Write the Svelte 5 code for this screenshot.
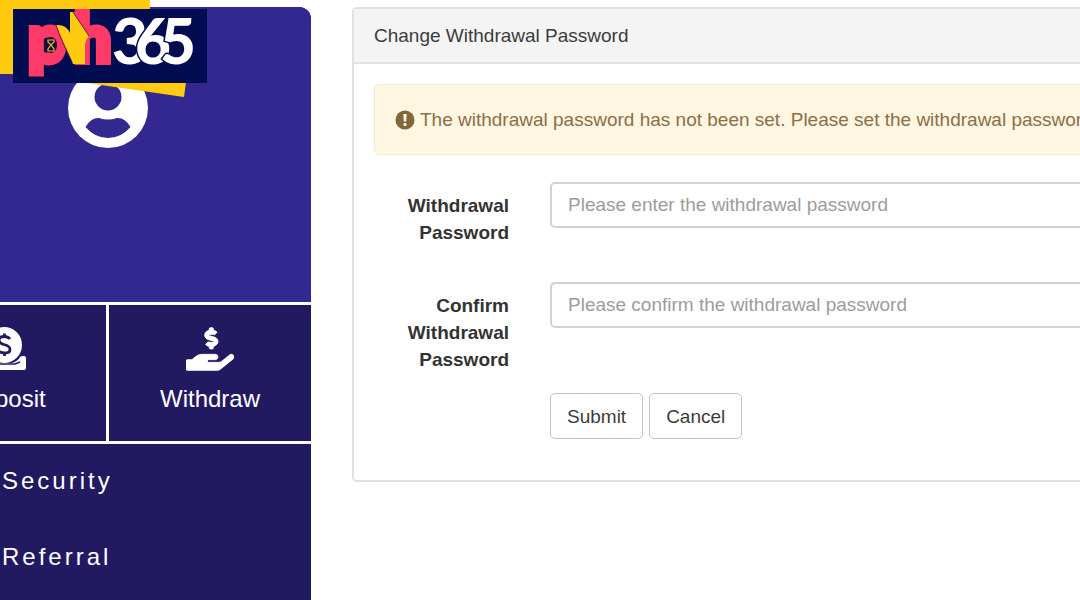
<script>
  let password = $state('');
  let confirmation = $state('');

  function reset() {
    password = '';
    confirmation = '';
  }
</script>

<div class="page">
  <a class="brand" href="#home" aria-label="ph365">
    <svg viewBox="0 0 210 100" width="210" height="100" role="img">
      <path d="M0 0H150V9H13V74H0Z" fill="#fecb10" />
      <path d="M80 82H186L184 97Z" fill="#fecb10" />
      <rect x="13" y="9" width="194" height="74" fill="#020c50" />
      <text x="28" y="62" class="ph">p</text>
      <text x="74" y="62" class="ph">h</text>
      <path d="M72 12H85V34H80Z" fill="#fd3a68" />
      <path d="M70 12H73L89 36Q86 39 85 44V64H73L56 25Q66 24 70 33Z" fill="#fecb10" />
      <path d="M73 12L89 36" stroke="#6b1b43" stroke-width="1" />
      <path d="M56 25Q60 38 72 62" fill="none" stroke="#6b1b43" stroke-width="1" />
      <ellipse cx="51" cy="45" rx="6" ry="8" fill="#1d0f2e" />
      <path d="M48 40H54V42L51 45L48 42ZM48 51H54V49L51 45L48 49Z" fill="none" stroke="#e8b53c" stroke-width="1.2" />
      <text x="112" y="64" class="num">3</text>
      <text x="135" y="64" class="num">6</text>
      <text x="160" y="64" class="num">5</text>
    </svg>
  </a>

  <aside class="sidebar">
    <div class="profile">
      <svg viewBox="0 0 80 80" width="80" height="80" aria-hidden="true">
        <circle cx="40" cy="40" r="40" fill="#fff" />
        <circle cx="40" cy="29" r="13.5" fill="#33288f" />
        <path d="M17.5 59Q23 49.5 31 50Q40 53 49 50Q57 49.5 62.500 59Q53 70 40 70Q27 70 17.500 59Z" fill="#33288f" />
      </svg>
    </div>
    <nav class="actions">
      <a href="#deposit">
        <svg viewBox="0 0 48 44" width="48" height="44" aria-hidden="true">
          <path d="M2 31Q2 29 4 29H9Q12 34 17 36H31Q37 34 39 30Q41 28.500 43 29Q45 29 45 31V41Q45 43 43 43H4Q2 43 2 41Z" fill="#fff" />
          <circle cx="23" cy="18" r="18" fill="#fff" />
          <path d="M12 37H34L39 35" fill="none" stroke="#221a61" stroke-width="1.5" />
          <path d="M29 12Q27 9.500 23 9.500Q18 9.500 18 13Q18 16 23 17.500Q29 19 29 22.500Q29 26 24 26Q19 26 17 23M23.500 6.500V10M23.500 25V29" fill="none" stroke="#221a61" stroke-width="2.800" />
        </svg>
        <span>Deposit</span>
      </a>
      <a href="#withdraw">
        <svg viewBox="0 0 576 512" width="48" height="44" aria-hidden="true">
          <path fill="#fff" stroke="#fff" stroke-width="10" d="M271.06,144.3l54.27,14.3a8.59,8.59,0,0,1,6.63,8.1c0,4.6-4.09,8.4-9.12,8.4h-35.6a30,30,0,0,1-11.19-2.2c-5.24-2.2-11.28-1.7-15.3,2l-19,17.5a11.68,11.68,0,0,0-2.25,2.66,11.42,11.42,0,0,0,3.88,15.74,83.77,83.77,0,0,0,34.51,11.5V240c0,8.8,7.83,16,17.37,16h17.37c9.55,0,17.38-7.2,17.38-16V222.4c32.93-3.6,57.84-31,53.5-63-3.15-23-22.46-41.3-46.56-47.7L282.68,97.4a8.59,8.59,0,0,1-6.63-8.1c0-4.6,4.09-8.4,9.12-8.4h35.6A30,30,0,0,1,332,83.1c5.23,2.2,11.28,1.7,15.3-2l19-17.5A11.31,11.31,0,0,0,368.47,61a11.43,11.43,0,0,0-3.84-15.78,83.82,83.82,0,0,0-34.52-11.5V16c0-8.8-7.82-16-17.37-16H295.37C285.82,0,278,7.2,278,16V33.6c-32.89,3.6-57.85,31-53.51,63C227.63,119.6,247,137.9,271.06,144.3ZM565.27,328.1c-11.8-10.7-30.2-10-42.6,0L430.27,402a63.64,63.64,0,0,1-40,14H272a16,16,0,0,1,0-32h78.29c15.9,0,30.71-10.9,33.25-26.6a31.2,31.2,0,0,0,.46-5.46A32,32,0,0,0,352,320H192a117.66,117.66,0,0,0-74.1,26.29L71.4,384H16A16,16,0,0,0,0,400v96a16,16,0,0,0,16,16H372.77a64,64,0,0,0,40-14L564,377a32,32,0,0,0,1.28-48.9Z" />
        </svg>
        <span>Withdraw</span>
      </a>
    </nav>
    <nav class="menu">
      <a href="#security">Security</a>
      <a href="#referral">Referral</a>
    </nav>
  </aside>

  <main class="panel">
    <h1>Change Withdrawal Password</h1>
    <div class="body">
      <p class="notice" role="alert">
        <svg viewBox="0 0 20 20" width="20" height="20" aria-hidden="true">
          <circle cx="10" cy="10" r="9.500" fill="#826738" />
          <path d="M8.300 4H11.700L11.200 11.500H8.800Z" fill="#fdf6e0" />
          <rect x="8.500" y="13" width="3" height="3" rx="1" fill="#fdf6e0" />
        </svg>
        <span>The withdrawal password has not been set. Please set the withdrawal password.</span>
      </p>
      <form onsubmit={(event) => event.preventDefault()}>
        <div class="row">
          <label for="password">Withdrawal Password</label>
          <input id="password" type="password" placeholder="Please enter the withdrawal password" bind:value={password} />
        </div>
        <div class="row">
          <label for="confirmation">Confirm Withdrawal Password</label>
          <input id="confirmation" type="password" placeholder="Please confirm the withdrawal password" bind:value={confirmation} />
        </div>
        <div class="row">
          <div class="buttons">
            <button type="submit">Submit</button>
            <button type="button" onclick={reset}>Cancel</button>
          </div>
        </div>
      </form>
    </div>
  </main>
</div>

<style>
  :global(body) {
    background: #fff;
    overflow: hidden;
  }

  .page,
  .page * {
    box-sizing: border-box;
  }

  .page {
    position: relative;
    display: flex;
    align-items: flex-start;
    gap: 41px;
    min-height: 100vh;
    padding-top: 7px;
    overflow: hidden;
    color: #3c3c3c;
    font: 19px/27px "Liberation Sans", Arial, sans-serif;
  }

  .brand {
    position: absolute;
    top: 0;
    left: 0;
  }

  .brand svg {
    display: block;
  }

  .ph {
    fill: #fd3a68;
    stroke: #fd3a68;
    stroke-width: 6px;
    font: 900 66px Lato, sans-serif;
  }

  .num {
    fill: #fff;
    stroke: #020c50;
    stroke-width: 3px;
    paint-order: stroke;
    font: 900 62px Lato, sans-serif;
  }

  .sidebar {
    flex: 0 0 407px;
    display: flex;
    flex-direction: column;
    min-height: calc(100vh - 7px);
    margin-left: -96px;
    border-radius: 12px 12px 0 0;
    overflow: hidden;
    background: #221a61;
  }

  .profile {
    display: flex;
    justify-content: center;
    height: 295px;
    padding-top: 61px;
    background: #33288f;
  }

  .actions {
    display: grid;
    grid-template-columns: 1fr 1fr;
    gap: 3px;
    padding: 3px 0;
    background: #fff;
  }

  .actions a {
    display: flex;
    flex-direction: column;
    align-items: center;
    gap: 14px;
    padding: 22px 0 42px;
    background: #221a61;
    color: #fff;
    font-size: 24px;
    line-height: 28px;
    text-decoration: none;
  }

  .actions a span {
    height: 14px;
  }

  .menu {
    display: flex;
    flex-direction: column;
    gap: 2px;
  }

  .menu a {
    padding-left: 98px;
    color: #fff;
    font-size: 24px;
    line-height: 74px;
    letter-spacing: 3px;
    text-decoration: none;
  }

  .panel {
    flex: 1 0 auto;
    border: 2px solid #e2e2e2;
    border-radius: 5px;
    margin-right: -100px;
  }

  h1 {
    margin: 0;
    padding: 13px 20px;
    border-bottom: 2px solid #e2e2e2;
    background: #f4f4f4;
    font-size: 19px;
    font-weight: 400;
  }

  .body {
    padding: 20px 20px 41px;
  }

  .notice {
    display: flex;
    align-items: center;
    gap: 5px;
    margin: 0 0 27px;
    padding: 21px 20px;
    border: 1px solid #faebcc;
    border-radius: 5px;
    background: #fdf6e0;
    color: #8a7048;
    white-space: nowrap;
  }

  .row {
    display: grid;
    grid-template-columns: 135px 1fr;
    column-gap: 41px;
    align-items: start;
  }

  .row + .row {
    margin-top: 20px;
  }

  .row:first-child {
    min-height: 80px;
  }

  label {
    padding-top: 10px;
    color: #333;
    font-weight: 700;
    text-align: right;
  }

  input {
    width: 100%;
    height: 46px;
    padding: 0 16px;
    border: 2px solid #d2d2d2;
    border-radius: 5px;
    background: #fff;
    color: #555;
    font: inherit;
  }

  input::placeholder {
    color: #9c9c9c;
    opacity: 1;
  }

  .buttons {
    grid-column: 2;
    display: flex;
    gap: 6px;
  }

  button {
    height: 46px;
    padding: 0 16px;
    border: 1px solid #c4c4c4;
    border-radius: 5px;
    background: #fff;
    color: #3c3c3c;
    font: inherit;
  }
</style>
